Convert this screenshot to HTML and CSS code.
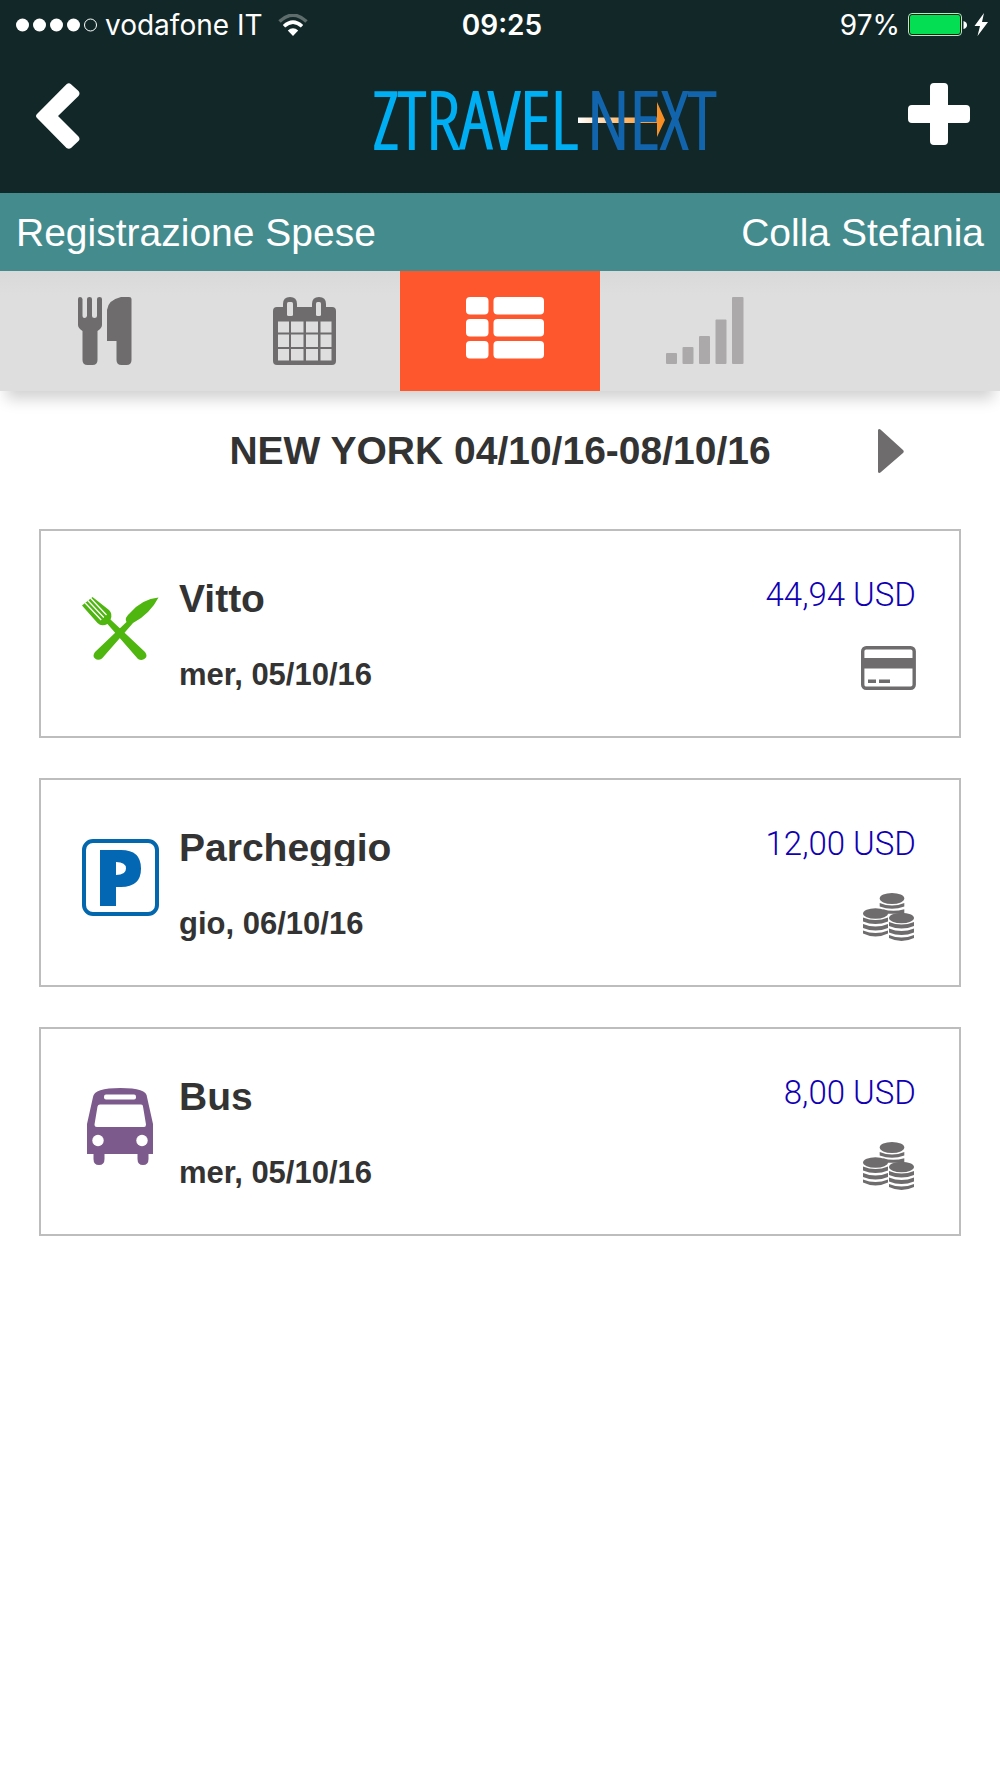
FILE: index.html
```html
<!DOCTYPE html>
<html lang="it">
<head>
<meta charset="utf-8">
<meta name="viewport" content="width=device-width, initial-scale=1">
<title>ZTravelNext - Registrazione Spese</title>
<link rel="stylesheet" href="styles.css">
</head>
<body>
<svg class="defs" width="0" height="0" aria-hidden="true">
  <symbol id="coins" viewBox="0 0 51 48">
    <g fill="#6f6c6d">
      <ellipse cx="29" cy="5.500" rx="12.300" ry="5.500"/>
      <path d="M16.700 10q12.300 5 24.600 0v3.500q-12.300 4.500-24.600 0zM20 16.200q10 3 21.300 0v4.500h-17z"/>
      <ellipse cx="12.500" cy="20.500" rx="12.500" ry="5.200"/>
      <path d="M0 24.500q12.500 5 25 0v4q-12.500 5-25 0zM0 31q12.500 5 25 0v4q-12.500 5-25 0zM0 37.500q12.500 5 25 0v3q-12.500 6-25 0z"/>
      <ellipse cx="38.500" cy="25" rx="12.500" ry="5.200"/>
      <path d="M26 29q12.500 5 25 0v4q-12.500 5-25 0zM26 35.500q12.500 5 25 0v4q-12.500 5-25 0zM26 42q12.500 5 25 0v3q-12.500 6-25 0z"/>
    </g>
  </symbol>
</svg>

<header class="header">
  <div class="status">
    <div class="status-left">
      <svg width="82" height="14" viewBox="0 0 82 14" aria-hidden="true">
        <g fill="#fff"><circle cx="6.500" cy="7" r="6.500"/><circle cx="23.500" cy="7" r="6.500"/><circle cx="40.500" cy="7" r="6.500"/><circle cx="57.500" cy="7" r="6.500"/></g>
        <circle cx="74.500" cy="7" r="6" fill="none" stroke="#fff"/>
      </svg>
      <span class="carrier">vodafone IT</span>
      <svg width="30" height="22" viewBox="0 0 30 22" aria-hidden="true">
        <path d="M1.500 7.500Q15-5 28.500 7.500" fill="none" stroke="#5e6d6c" stroke-width="3.500"/>
        <path d="M6 12.200Q15 4 24 12.200" fill="none" stroke="#fff" stroke-width="3.500"/>
        <path d="M9.800 16.500Q15 12 20.200 16.500L15 22z" fill="#fff"/>
      </svg>
    </div>
    <span class="time">09:25</span>
    <div class="status-right">
      <span>97%</span>
      <svg width="80" height="24" viewBox="0 0 80 24" aria-hidden="true">
        <rect x=".5" y=".5" width="53" height="22" rx="3.500" fill="#06250f" stroke="#b9e8c6"/>
        <rect x="2" y="2" width="50" height="19" rx="2" fill="#04de53"/>
        <path d="M55.500 8q3.500 1 3.500 4t-3.500 4z" fill="#fff"/>
        <path d="M76 0L66.500 13h5.500L69.500 23 80 9h-6z" fill="#fff"/>
      </svg>
    </div>
  </div>
  <div class="nav">
    <button class="icon-button" type="button" aria-label="Indietro">
      <svg width="44" height="66" viewBox="0 0 44 66"><path d="M30.500 1.200q2.500-2 4.500 0L42.500 8q2 2.500 0 5L22 33l20.500 20.500q2 2.500 0 4.500L35 65q-2 1.500-4.500 0L1 35q-2-2 0-4z" fill="#fff"/></svg>
    </button>
    <svg class="logo" width="346" height="68" viewBox="0 0 346 68" role="img" aria-label="ZTravelNext">
      <defs><linearGradient id="arrow"><stop offset="0" stop-color="#fff"/><stop offset=".45" stop-color="#ffc07a"/><stop offset="1" stop-color="#f7891b"/></linearGradient></defs>
      <text class="logo-text" x="0" y="66" fill="#00aef3" stroke="#00aef3">ZTRAVEL</text>
      <path d="M205 34.500h79V19l8 18-8 17V40h-79z" fill="url(#arrow)"/>
      <text class="logo-text" x="343" y="66" text-anchor="end" fill="#1265ac" stroke="#1265ac">NEXT</text>
    </svg>
    <button class="icon-button" type="button" aria-label="Aggiungi">
      <svg width="62" height="62" viewBox="0 0 62 62"><path d="M26 0h10q4 0 4 4v18h18q4 0 4 4v10q0 4-4 4H40v18q0 4-4 4H26q-4 0-4-4V40H4q-4 0-4-4V26q0-4 4-4h18V4q0-4 4-4z" fill="#fff"/></svg>
    </button>
  </div>
</header>

<div class="band"><span>Registrazione Spese</span><span>Colla Stefania</span></div>

<nav class="tabs">
  <button class="tab" type="button" aria-label="Spese">
    <svg width="54" height="68" viewBox="0 0 54 68" fill="#6f6c6d"><path d="M0 2q0-2 2-2t2.500 2v17q0 2 2 2t2.500-2V2q0-2 2.500-2T14 2v17q0 2 2.500 2t2.500-2V2q0-2 2.500-2T24 2v26q0 3-4.500 6v29q0 5-5 5H9.500q-5 0-5-5V34Q0 31 0 28zM43 0h8q2.500 0 2.500 2v61q0 5-5 5h-5q-5 0-5-5V44H29V13Q30 3 43 0z"/></svg>
  </button>
  <button class="tab" type="button" aria-label="Calendario">
    <svg width="64" height="68" viewBox="0 0 64 68"><path d="M4 10h6V7q0-7 7-7t7 7v3h15V7q0-7 7-7t7 7v3h6q4 0 4 4v50q0 4-4 4H4q-4 0-4-4V14q0-4 4-4z" fill="#6f6c6d"/><g fill="#dedede"><rect x="14" y="5" width="6" height="14" rx="1.500"/><rect x="43" y="5" width="5" height="14" rx="1.500"/><path d="M5 24.500h11v11H5zM18 24.500h12.500v11H18zM33 24.500h12v11H33zM47.500 24.500h11v11h-11zM5 37.500h11v12.500H5zM18 37.500h12.500v12.500H18zM33 37.500h12v12.500H33zM47.500 37.500h11v12.500h-11zM5 52h11v11.500H5zM18 52h12.500v11.500H18zM33 52h12v11.500H33zM47.500 52h11v11.500h-11z"/></g></svg>
  </button>
  <button class="tab tab-active" type="button" aria-label="Elenco" aria-current="page">
    <svg width="78" height="68" viewBox="0 0 78 68" fill="#fff"><rect y="0" width="22.500" height="17.500" rx="4"/><rect x="27.500" y="0" width="50.500" height="17.500" rx="4"/><rect y="22" width="22.500" height="17.500" rx="4"/><rect x="27.500" y="22" width="50.500" height="17.500" rx="4"/><rect y="44" width="22.500" height="17.500" rx="4"/><rect x="27.500" y="44" width="50.500" height="17.500" rx="4"/></svg>
  </button>
  <button class="tab" type="button" aria-label="Statistiche">
    <svg width="78" height="68" viewBox="0 0 78 68" fill="#aba9aa"><rect y="56" width="11" height="11" rx="1"/><rect x="16.500" y="50" width="11" height="17" rx="1"/><rect x="33" y="39" width="11" height="28" rx="1"/><rect x="49.500" y="22.500" width="11" height="44.500" rx="1"/><rect x="66" y="0" width="11.500" height="67" rx="1"/></svg>
  </button>
</nav>

<main class="main">
  <div class="trip">
    <h1 class="trip-title">NEW YORK 04/10/16-08/10/16</h1>
    <button class="icon-button trip-next" type="button" aria-label="Successivo">
      <svg width="26" height="44" viewBox="0 0 26 44"><path d="M0 1q1-2 3 0l22 20q1.500 1.500 0 3L3 43q-2 2-3 0z" fill="#6f6c6d"/></svg>
    </button>
  </div>

  <ul class="cards">
    <li class="card">
      <svg class="kind" width="77" height="77" viewBox="0 0 77 77" aria-hidden="true">
        <g fill="#4fb50f"><path d="M76.500 7.500Q60 9 48 23q-6 5-3.500 9L13 62q-3 4 0 6.500t7 0L51 33Q68 24 76.500 7.500z"/><path d="M10.500 7L27 20q4 4 1.500 9.500L63 62q3 4 0 6.500t-7 .5L25.500 34q-6 3-10-1L0 15.500z"/></g>
        <path d="M3.200 13l16 17M5.800 10.500l16 17M8.500 8l16 17" stroke="#fff" stroke-width="1.300"/>
      </svg>
      <div class="info"><h2 class="name">Vitto</h2><p class="date">mer, 05/10/16</p></div>
      <div class="side"><span class="amount">44,94 USD</span>
        <svg width="55" height="48" viewBox="0 0 55 48" role="img" aria-label="Carta"><rect x="1.700" y="3.700" width="51.500" height="40.500" rx="3.500" fill="#fff" stroke="#6f6c6d" stroke-width="3.400"/><path d="M1 14h53v10.500H1zM7 35.500h8v3.500H7zM18 35.500h11v3.500H18z" fill="#6f6c6d"/></svg>
      </div>
    </li>
    <li class="card">
      <svg class="kind" width="77" height="77" viewBox="0 0 77 77" aria-hidden="true"><rect x="2" y="2" width="73" height="73" rx="9" fill="#fff" stroke="#0367ad" stroke-width="4"/><path fill="#0367b3" fill-rule="evenodd" d="M18 11h21q20 0 20 18.500T39 48h-5v19H18zM34 23v13q10 0 10-6.500T34 23z"/></svg>
      <div class="info"><h2 class="name">Parcheggio</h2><p class="date">gio, 06/10/16</p></div>
      <div class="side"><span class="amount">12,00 USD</span><svg class="coins" width="51" height="48" role="img" aria-label="Contanti"><use href="#coins"/></svg></div>
    </li>
    <li class="card">
      <svg class="kind" width="77" height="77" viewBox="0 0 77 77" aria-hidden="true">
        <path d="M5 66V36L11 9Q12 0 38.500 0T65 9l6 27v30h-4.500v5q0 6-5.500 6t-5.500-6v-5h-33v5q0 6-5.500 6t-5.500-6v-5z" fill="#7d5a8c"/>
        <g fill="#fff"><rect x="22" y="6.500" width="32" height="5" rx="2"/><path d="M18 16.500h41q2 0 2 2l3 18q0 2.500-2 2.500H15q-2.500 0-2.500-2.500l3-18q.500-2 2.500-2z"/><circle cx="16" cy="52.500" r="5.700"/><circle cx="60" cy="52.500" r="5.700"/></g>
      </svg>
      <div class="info"><h2 class="name">Bus</h2><p class="date">mer, 05/10/16</p></div>
      <div class="side"><span class="amount">8,00 USD</span><svg class="coins" width="51" height="48" role="img" aria-label="Contanti"><use href="#coins"/></svg></div>
    </li>
  </ul>
</main>
</body>
</html>
```
FILE: styles.css
```css
* { box-sizing: border-box; }

body {
  margin: 0;
  background: #fff;
  color: #333;
  font-family: "Liberation Sans", Arial, sans-serif;
}

.defs { position: absolute; }

svg { display: block; flex: none; }

h1, h2, p, ul { margin: 0; padding: 0; }

button {
  border: 0;
  padding: 0;
  background: none;
  cursor: pointer;
}

.header {
  background: #122828;
  padding-bottom: 43px;
}

.status {
  display: grid;
  grid-template-columns: 1fr auto 1fr;
  align-items: center;
  height: 50px;
  padding: 0 12px 0 16px;
  color: #fff;
  font-family: Inter, sans-serif;
  font-size: 28px;
  line-height: 34px;
}

.status-left, .status-right { display: flex; align-items: center; }
.status-left { gap: 7px; }
.status-right { gap: 8px; justify-content: flex-end; }
.carrier { margin-right: 8px; }
.time { font-weight: 600; }

.nav {
  display: flex;
  align-items: flex-start;
  justify-content: space-between;
  height: 100px;
  padding: 33px 30px 0 36px;
}

.logo { margin-left: 104px; overflow: visible; }

.logo-text {
  font-family: "Open Sans Condensed Light", "Open Sans Condensed", sans-serif;
  font-size: 80px;
  font-weight: 300;
  stroke-width: 2px;
}

.band {
  display: flex;
  justify-content: space-between;
  padding: 17px 16px 16px;
  background: #438b8d;
  color: #fff;
  font-size: 39px;
  line-height: 45px;
}

.tabs {
  display: flex;
  background: linear-gradient(#d9d9d9, #dedede 24px);
  box-shadow: 0 14px 14px -6px rgba(0, 0, 0, 0.18);
}

.tab {
  flex: 0 0 20%;
  display: flex;
  justify-content: center;
  padding: 26px 0 26px 10px;
}

.tab-active { background: #ff572d; }

.main { padding: 30px 39px; }

.trip {
  display: grid;
  grid-template-columns: 1fr auto 1fr;
  align-items: center;
  padding-bottom: 48px;
}

.trip-title {
  grid-column: 2;
  font-size: 39px;
  line-height: 60px;
}

.trip-next { justify-self: end; margin-right: 57px; }

.cards { display: grid; gap: 40px; list-style: none; }

.card {
  display: flex;
  align-items: flex-start;
  border: 2px solid #bdbdbd;
  padding: 48px 43px 43px 41px;
}

.kind { margin-top: 11px; }

.info { flex: 1; padding-left: 20px; }

/* Long names are cut at the line box */
.name {
  overflow: hidden;
  height: 38px;
  font-size: 39px;
  line-height: 39px;
}

.date {
  margin-top: 40px;
  font-size: 31px;
  font-weight: bold;
  line-height: 36px;
}

.side {
  display: flex;
  flex-direction: column;
  align-items: flex-end;
  gap: 33px;
}

.amount {
  color: #1000b4;
  font-family: Roboto, sans-serif;
  font-size: 33px;
  font-weight: 300;
  line-height: 32px;
}

.coins { margin-right: 2px; }
```
